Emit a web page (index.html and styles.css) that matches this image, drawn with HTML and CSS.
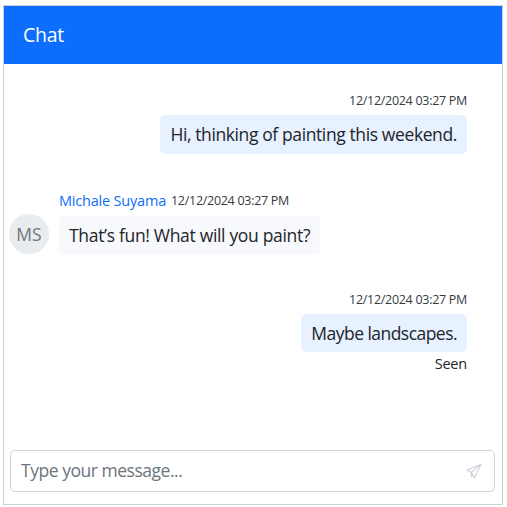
FILE: index.html
```html
<!DOCTYPE html>
<html lang="en">
<head>
<meta charset="utf-8">
<title>Chat</title>
<link rel="stylesheet" href="styles.css">
</head>
<body>
<main class="chat">
  <header class="chat-header"><span>Chat</span></header>
  <section class="messages">
    <article class="message own">
      <div class="meta"><time>12/12/2024 03:27 PM</time></div>
      <div class="bubble"><span class="text-plan">Hi, thinking of painting this weekend.</span></div>
    </article>
    <article class="message other">
      <div class="avatar">MS</div>
      <div class="body">
        <div class="meta"><span class="author">Michale Suyama</span><time>12/12/2024 03:27 PM</time></div>
        <div class="bubble"><span class="text-question">That’s fun! What will you paint?</span></div>
      </div>
    </article>
    <article class="message own last">
      <div class="meta"><time>12/12/2024 03:27 PM</time></div>
      <div class="bubble"><span class="text-reply">Maybe landscapes.</span></div>
      <div class="status">Seen</div>
    </article>
  </section>
  <footer class="composer">
    <span class="placeholder">Type your message...</span>
    <svg class="send" viewBox="0 0 16 16" aria-hidden="true"><path d="M15.2 1.2.9 7.3l4.4 2.1 3.3 5.2L15.2 1.2ZM5.3 9.4l9.9-8.2M5.3 9.4v4.2l2-1.6"/></svg>
  </footer>
</main>
</body>
</html>
```

FILE: styles.css
```css
* { box-sizing: border-box; }
body {
  margin: 0;
  padding: 5px 4px 2px 3px;
  background: #fff;
  color: #212529;
  font-family: "Open Sans", "Noto Sans", sans-serif;
  font-size: 17.5px;
  font-weight: 400;
}
.chat {
  display: flex;
  flex-direction: column;
  width: 500px;
  height: 500px;
  border: 1px solid #ced0d5;
}
.chat-header {
  height: 58px;
  padding: 0 19px;
  background: #0d6efd;
  color: #fff;
  font-size: 19.5px;
  letter-spacing: -0.3px;
  line-height: 58px;
}
.messages { flex: 1; padding: 28px 35px 0 5px; }
.message { display: flex; }
.own { flex-direction: column; align-items: flex-end; }
.meta {
  display: flex;
  align-items: center;
  gap: 5px;
  height: 18px;
  margin-bottom: 5px;
  white-space: nowrap;
}
time { color: #343a40; font-size: 12.5px; letter-spacing: -0.29px; line-height: 18px; }
.bubble {
  height: 39px;
  padding: 0 10px;
  border-radius: 5px;
  background: #e7f1ff;
  line-height: 39px;
  white-space: nowrap;
}
.other { align-items: flex-start; gap: 10px; margin-top: 38px; }
.other .bubble { width: 261px; background: #f8f9fc; }
.other .meta { margin-bottom: 6px; }
.avatar {
  width: 40px;
  height: 40px;
  margin-top: 22px;
  border-radius: 50%;
  background: #e9ecef;
  color: #6c757d;
  line-height: 40px;
  text-align: center;
}
.author { color: #0d6efd; font-size: 14.5px; letter-spacing: -0.2px; line-height: 18px; }
.last { margin-top: 36px; }
.last .bubble { height: 38px; line-height: 39px; }
.status { margin-top: 2px; font-size: 14.5px; letter-spacing: -0.2px; line-height: 20px; }
.text-plan { letter-spacing: -0.39px; }
.text-question { letter-spacing: -0.32px; }
.text-reply { letter-spacing: -0.54px; }
.composer {
  display: flex;
  align-items: center;
  justify-content: space-between;
  height: 42px;
  margin: 0 7px 12px 6px;
  padding: 0 12px 0 10px;
  border: 1px solid #ced4da;
  border-radius: 5px;
}
.placeholder { color: #6c757d; letter-spacing: -0.47px; line-height: 38px; margin-top: -2px; }
.send {
  width: 16px;
  height: 16px;
  fill: none;
  stroke: #ced4da;
  stroke-width: 1.2;
  stroke-linejoin: round;
}
```
